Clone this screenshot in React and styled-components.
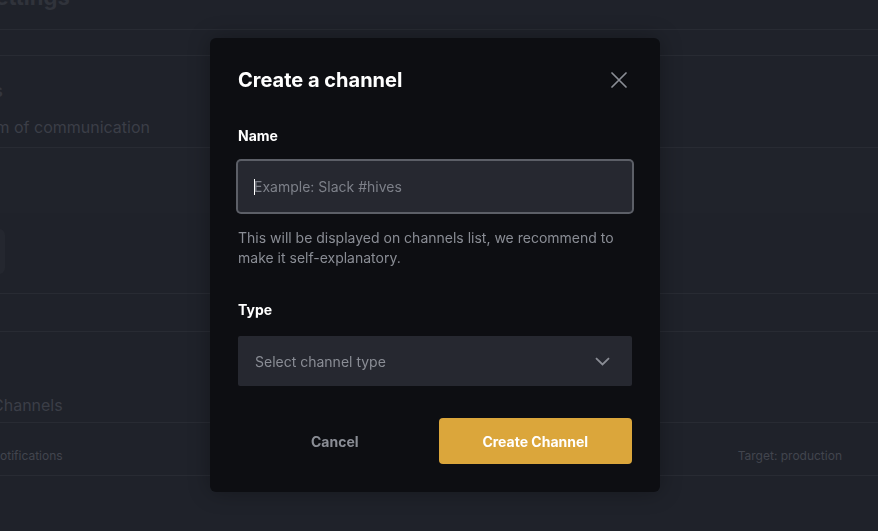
import React from 'react';
import styled, { createGlobalStyle } from 'styled-components';

const GlobalStyle = createGlobalStyle`
  html, body {
    margin: 0;
    padding: 0;
    background: #1f222a;
    font-family: Inter, "Noto Sans", sans-serif;
    overflow: hidden;
  }
`;

const Page = styled.div`
  width: 878px;
  height: 531px;
  overflow: hidden;
  background: #1f222a;
  color: #3d4049;
`;

const PageTitle = styled.h1`
  margin: -17px 0 0 -19px;
  height: 47px;
  font-size: 22px;
  line-height: 28px;
  font-weight: 700;
  color: #30333b;
  border-bottom: 1px solid #282b33;
  box-sizing: border-box;
`;

const Band = styled.div`
  height: ${p => p.h}px;
  background: ${p => p.bg || '#1f222a'};
  border-bottom: 1px solid #282b33;
  box-sizing: border-box;
`;

const Intro = styled.div`
  height: 92px;
  display: flex;
  flex-direction: column;
  padding-top: 24px;
  gap: 14px;
  border-bottom: 1px solid #282b33;
  box-sizing: border-box;
`;

const Clipped = styled.div`
  width: ${p => p.end}px;
  display: flex;
  justify-content: flex-end;
  white-space: nowrap;
  font-size: ${p => p.size}px;
  line-height: 22px;
  font-weight: ${p => p.weight || 400};
  color: ${p => p.color || '#3b3e47'};
`;

const Block = styled.div`
  height: 146px;
  display: flex;
  flex-direction: column;
  border-bottom: 1px solid #282b33;
  box-sizing: border-box;
`;

const Shade = styled.div`
  height: 65px;
  background: #20232b;
`;

const GhostBox = styled.div`
  margin: 16px 0 0 -115px;
  width: 120px;
  height: 45px;
  border-radius: 6px;
  background: #24272f;
`;

const ChannelsHead = styled.div`
  height: 91px;
  display: flex;
  align-items: flex-end;
  padding: 0 0 6px 0;
  margin-left: -8px;
  font-size: 16px;
  line-height: 22px;
  color: #3b3e47;
  border-bottom: 1px solid #282b33;
  box-sizing: border-box;
`;

const ListRow = styled.div`
  height: 53px;
  display: flex;
  align-items: center;
  justify-content: space-between;
  padding: 12px 36px 0 0;
  margin-left: -9px;
  font-size: 12px;
  color: #42454e;
  border-bottom: 1px solid #282b33;
  box-sizing: border-box;
`;

const Overlay = styled.div`
  position: fixed;
  inset: 0;
  display: flex;
  justify-content: center;
  align-items: flex-start;
  padding: 38px 8px 0 0;
`;

const Modal = styled.div`
  width: 450px;
  box-sizing: border-box;
  padding: 28px;
  background: #0d0e12;
  border-radius: 6px;
  box-shadow: 0 0 22px rgba(0, 0, 0, 0.3);
  display: flex;
  flex-direction: column;
`;

const Header = styled.div`
  display: flex;
  align-items: center;
  justify-content: space-between;
  height: 28px;
  margin-bottom: 32px;
`;

const Title = styled.h2`
  margin: 0;
  font-size: 20px;
  line-height: 28px;
  font-weight: 700;
  color: #ffffff;
`;

const CloseButton = styled.button`
  background: none;
  border: 0;
  padding: 0;
  margin-right: 5px;
  display: flex;
  cursor: pointer;
`;

const Label = styled.label`
  font-size: 14px;
  line-height: 20px;
  font-weight: 700;
  color: #ffffff;
  margin-bottom: ${p => p.gap || 15}px;
`;

const FieldWrap = styled.div`
  position: relative;
  height: 51px;
`;

const Input = styled.input`
  width: 100%;
  height: 100%;
  box-sizing: border-box;
  background: #262830;
  border: 0;
  border-radius: 3px;
  box-shadow: 0 0 0 2px #5c5f67;
  padding: 0 16px;
  font-family: inherit;
  font-size: 14px;
  color: #ffffff;
  outline: none;
  &::placeholder {
    color: #7d8089;
  }
`;

const Caret = styled.span`
  position: absolute;
  left: 16px;
  top: 18px;
  width: 1px;
  height: 16px;
  background: #ffffff;
`;

const Help = styled.p`
  margin: 16px 0 32px;
  font-size: 14px;
  line-height: 20px;
  color: #8a8d95;
`;

const Select = styled.div`
  height: 50px;
  display: flex;
  align-items: center;
  justify-content: space-between;
  padding: 0 22px 0 17px;
  background: #262830;
  border-radius: 2px;
  font-size: 14px;
  color: #8a8d95;
  margin-bottom: 32px;
`;

const Actions = styled.div`
  display: grid;
  grid-template-columns: 1fr 1fr;
  gap: 7px;
`;

const Button = styled.button`
  height: 46px;
  border: 0;
  border-radius: 4px;
  font-family: inherit;
  font-size: 14px;
  font-weight: 700;
  cursor: pointer;
  background: ${p => (p.primary ? '#dba63b' : 'transparent')};
  color: ${p => (p.primary ? '#ffffff' : '#8a8d95')};
`;

function CloseIcon() {
  return (
    <svg width="16" height="16" viewBox="0 0 16 16" fill="none">
      <path d="M1 1 15 15M15 1 1 15" stroke="#8a8d95" strokeWidth="1.7" strokeLinecap="round" />
    </svg>
  );
}

function Chevron() {
  return (
    <svg width="15" height="9" viewBox="0 0 15 9" fill="none">
      <path d="M1 1.2 7.5 7.5 14 1.2" stroke="#8a8d95" strokeWidth="1.8" />
    </svg>
  );
}

export default function App() {
  return (
    <>
      <GlobalStyle />
      <Page>
        <PageTitle>Settings</PageTitle>
        <Band h={26} />
        <Intro>
          <Clipped end={3} size={18} weight={600} color="#33363e">
            Alerts
          </Clipped>
          <Clipped end={150} size={16}>
            Choose your preferred medium of communication
          </Clipped>
        </Intro>
        <Block>
          <Shade />
          <GhostBox />
        </Block>
        <Band h={38} />
        <ChannelsHead>Channels</ChannelsHead>
        <ListRow>
          <span>Notifications</span>
          <span>Target: production</span>
        </ListRow>
      </Page>
      <Overlay>
        <Modal>
          <Header>
            <Title>Create a channel</Title>
            <CloseButton aria-label="Close">
              <CloseIcon />
            </CloseButton>
          </Header>
          <Label>Name</Label>
          <FieldWrap>
            <Input placeholder="Example: Slack #hives" />
            <Caret />
          </FieldWrap>
          <Help>
            This will be displayed on channels list, we recommend to make it
            self-explanatory.
          </Help>
          <Label gap={16}>Type</Label>
          <Select>
            <span>Select channel type</span>
            <Chevron />
          </Select>
          <Actions>
            <Button>Cancel</Button>
            <Button primary>Create Channel</Button>
          </Actions>
        </Modal>
      </Overlay>
    </>
  );
}
